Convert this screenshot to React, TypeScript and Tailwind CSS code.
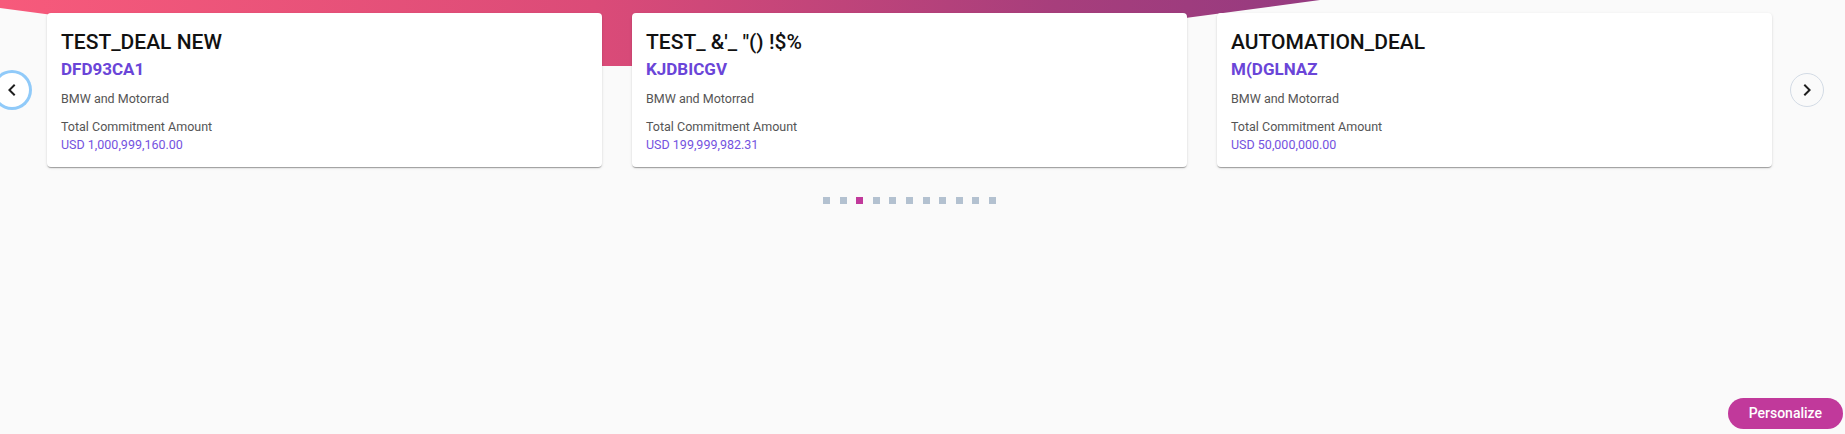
import React from "react";

const deals = [
  { name: "TEST_DEAL NEW", code: "DFD93CA1", amount: "USD 1,000,999,160.00" },
  { name: "TEST_ &'_ \"() !$%", code: "KJDBICGV", amount: "USD 199,999,982.31" },
  { name: "AUTOMATION_DEAL", code: "M(DGLNAZ", amount: "USD 50,000,000.00" },
];

function Chevron({ dir }: { dir: "left" | "right" }) {
  return (
    <svg width="24" height="24" viewBox="0 0 24 24" fill="#1f1f1f">
      {dir === "left" ? (
        <path d="M15.41 7.41L14 6l-6 6 6 6 1.41-1.41L10.83 12z" />
      ) : (
        <path d="M8.59 16.59L10 18l6-6-6-6-1.41 1.41L13.17 12z" />
      )}
    </svg>
  );
}

function DealCard({ name, code, amount }: { name: string; code: string; amount: string }) {
  return (
    <div className="bg-white rounded-[4px] h-[154px] pl-[14px] pr-[14px] pt-[15px] shadow-[0_2px_1px_-1px_rgba(0,0,0,0.2),0_1px_1px_0_rgba(0,0,0,0.14),0_1px_3px_0_rgba(0,0,0,0.12)]">
      <div className="text-[21px] leading-[28px] font-medium text-[#111]">{name}</div>
      <div className="mt-[1px] text-[17px] leading-[24px] font-bold text-[#6a45d8]">{code}</div>
      <div className="mt-[10px] text-[12.5px] leading-[16px] text-[#555]">BMW and Motorrad</div>
      <div className="mt-[12px] text-[12.5px] leading-[16px] text-[#555]">Total Commitment Amount</div>
      <div className="mt-[2px] text-[12.5px] leading-[16px] text-[#7452e0]">{amount}</div>
    </div>
  );
}

export default function App() {
  const dots = Array.from({ length: 11 }, (_, i) => i);
  return (
    <div className="relative min-h-screen w-full overflow-hidden bg-[#fafafa] font-['Roboto',sans-serif]">
      <svg className="absolute left-0 top-0" width="1845" height="70" viewBox="0 0 1845 70">
        <defs>
          <linearGradient id="band" x1="0" y1="0" x2="1320" y2="0" gradientUnits="userSpaceOnUse">
            <stop offset="0" stopColor="#f75a7b" />
            <stop offset="0.45" stopColor="#db4b78" />
            <stop offset="0.8" stopColor="#a73e7c" />
            <stop offset="1" stopColor="#953a80" />
          </linearGradient>
        </defs>
        <polygon points="-60,0 436,66 824,66 1320,0" fill="url(#band)" />
      </svg>

      <div className="relative pt-[13px]">
        <div className="flex items-center">
          <button className="-ml-[5px] flex h-[34px] w-[34px] shrink-0 items-center justify-center rounded-full bg-white shadow-[0_0_0_3px_#90caf9]">
            <Chevron dir="left" />
          </button>
          <div className="ml-[18px] grid w-[1725px] shrink-0 grid-cols-3 gap-[30px]">
            {deals.map((d) => (
              <DealCard key={d.code} {...d} />
            ))}
          </div>
          <button className="ml-[18px] flex h-[34px] w-[34px] shrink-0 items-center justify-center rounded-full border border-[#d3dbe5]">
            <Chevron dir="right" />
          </button>
        </div>

        <div className="ml-[47px] mt-[30px] flex w-[1725px] justify-center gap-[9.6px]">
          {dots.map((i) => (
            <span
              key={i}
              className={i === 2 ? "h-[7px] w-[7px] bg-[#c1399b]" : "h-[7px] w-[7px] bg-[#b3c1d0]"}
            />
          ))}
        </div>
      </div>

      <button className="fixed bottom-[5px] right-[2px] h-[31px] rounded-full bg-[#c1399b] px-[21px] text-[14px] font-medium text-white">
        Personalize
      </button>
    </div>
  );
}
